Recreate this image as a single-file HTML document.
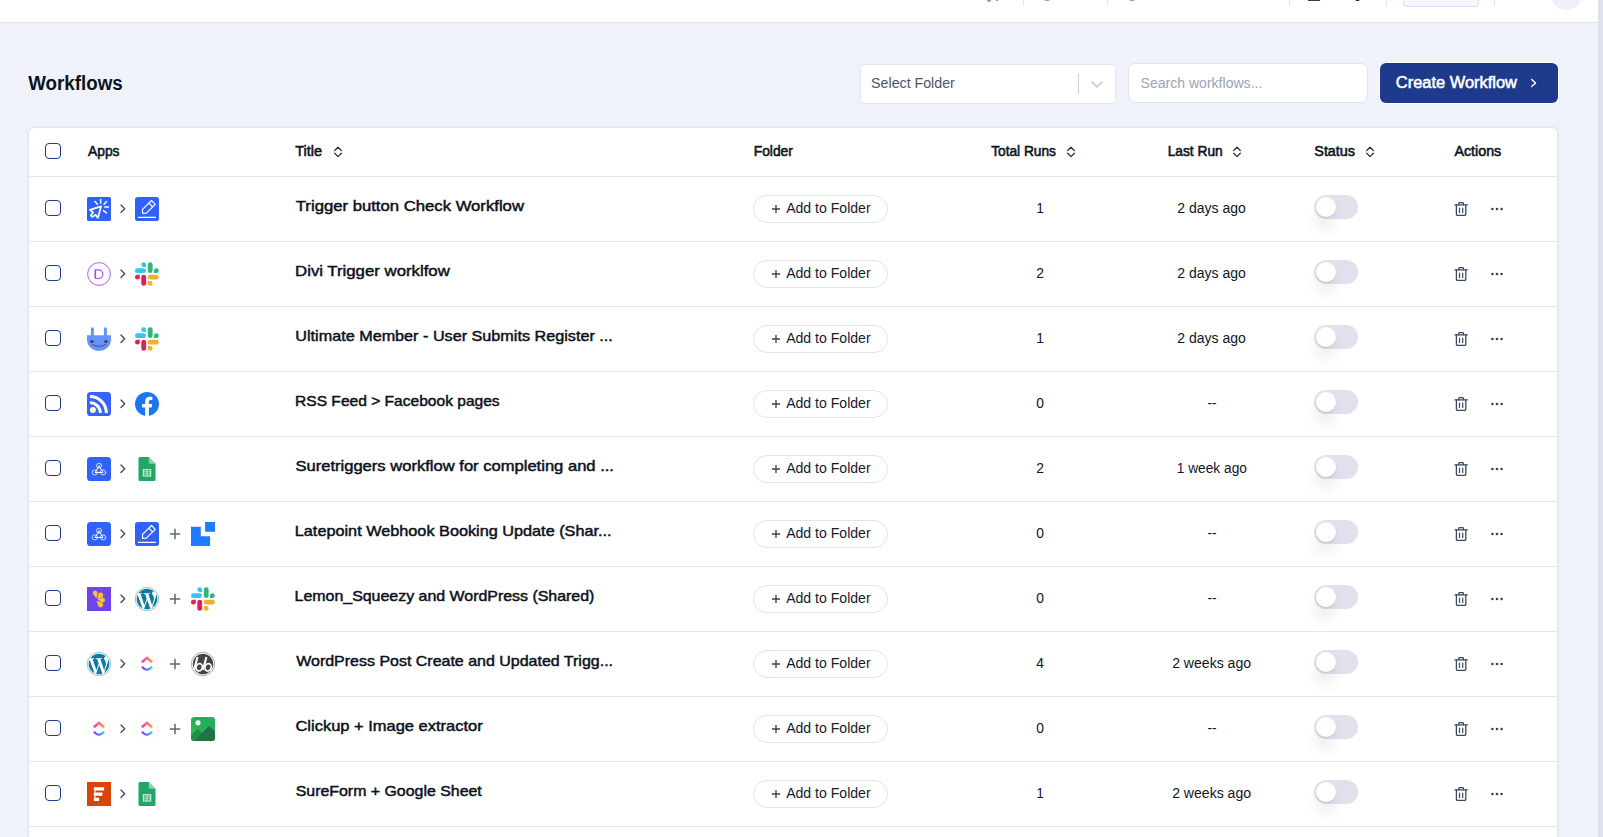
<!DOCTYPE html>
<html lang="en">
<head>
<meta charset="utf-8">
<title>Workflows</title>
<style>
*{box-sizing:border-box;margin:0;padding:0}
html,body{width:1603px;height:837px;overflow:hidden}
body{background:#eff2fb;font-family:"Liberation Sans",sans-serif;color:#111827;position:relative}
.abs{position:absolute}
.topbar{position:absolute;left:0;top:0;width:1598px;height:23px;background:#fff;border-bottom:1px solid #e1e5ef}
.vsep{position:absolute;top:0;width:1px;height:6px;background:#dfe3ec}
.scroll{position:absolute;left:1598px;top:0;width:5px;height:837px;background:#dde2ec}
h1{position:absolute;left:28px;top:70.4px;font-size:19.5px;line-height:26px;font-weight:700;color:#0b1220;white-space:nowrap}
.sel{position:absolute;left:860px;top:64px;width:256px;height:40px;background:#fff;border:1px solid #e1e5ef;border-radius:4px}
.sel .t{position:absolute;left:10px;top:0;line-height:36px;font-size:14px;color:#4b5563;white-space:nowrap}
.sel .sp{position:absolute;left:217px;top:8px;width:1px;height:21px;background:#cfcfcf}
.sel svg{position:absolute;left:230px;top:15.9px}
.search{position:absolute;left:1128px;top:63px;width:240px;height:40px;background:#fff;border:1px solid #e3e1f0;border-radius:7px}
.search .t{position:absolute;left:12px;top:0;line-height:38px;font-size:14px;color:#9aa4b8;white-space:nowrap}
.btn{position:absolute;left:1380px;top:63px;width:178px;height:40px;background:#1e3a8a;border-radius:6px;box-shadow:0 0 0 1px rgba(255,255,255,.75)}
.btn .t{position:absolute;left:16px;top:0;line-height:39px;font-size:16px;font-weight:400;-webkit-text-stroke:0.55px #fff;color:#fff;white-space:nowrap}
.btn svg{position:absolute;left:150px;top:15px}
.tbl{position:absolute;left:28px;top:127px;width:1530px;height:730px;background:#fff;border:1px solid #e1e6f0;border-radius:6px;box-shadow:0 0 0 1px rgba(215,222,236,.3)}
.in{position:absolute;left:1px;top:1px;right:0;bottom:0}
.hd{position:absolute;left:0;top:0;width:100%;height:48px}
.hd::after,.row::after{content:"";position:absolute;left:-1px;right:0;bottom:0;height:1px;background:#e2e6f0}
.th{position:absolute;top:15px;font-size:13.8px;line-height:16px;font-weight:400;-webkit-text-stroke:0.55px #0d1424;color:#0d1424;white-space:nowrap}
.srt{position:absolute;top:17px}
.row{position:absolute;left:0;width:100%;height:65px}
.cb{position:absolute;left:15px;width:16px;height:16px;border:1.5px solid #1e3a8a;border-radius:4px;background:#fff}
.hd .cb{top:14px}
.row .cb{top:23px}
.ic{position:absolute;top:20px;width:24px;height:24px}
.i1{left:57px}.i2{left:105px}.i3{left:161px}
.chev{position:absolute;left:90.1px;top:27.1px}
.plus{position:absolute;left:139px;top:26px}
.ttl{position:absolute;left:265px;top:18.5px;font-size:14.5px;line-height:20px;font-weight:400;-webkit-text-stroke:0.45px #0b1020;color:#0b1020;white-space:nowrap}
.pill{position:absolute;left:723px;top:18px;width:135px;height:28px;border:1px solid #e1e2ef;border-radius:14px;background:#fff}
.pill svg{position:absolute;left:17px;top:8px}
.pill .t{position:absolute;left:32px;top:0;line-height:26px;font-size:13.8px;color:#141b2b;white-space:nowrap}
.num{position:absolute;left:960px;width:100px;top:23px;text-align:center;font-size:13.8px;line-height:18px;color:#0f1626;white-space:nowrap}
.last span{display:inline-block}
.last .dsh{position:relative;top:0}
.last{position:absolute;left:1107px;width:150px;top:23px;text-align:center;font-size:13.8px;line-height:18px;color:#0f1626;white-space:nowrap}
.tog{position:absolute;left:1284px;top:18px;width:44px;height:24px;border-radius:12px;background:#e3dfed}
.tog i{position:absolute;left:2px;top:2px;width:20px;height:20px;border-radius:50%;background:#fff;box-shadow:-1px 12px 13px rgba(80,80,95,.10),0 1px 2px rgba(80,70,110,.12)}
.trash{position:absolute;left:1424px;top:24px}
.dots{position:absolute;left:1460px;top:30px}
</style>
</head>
<body>
<svg width="0" height="0" style="position:absolute"><defs>
<symbol id="i-click" viewBox="0 0 24 24"><rect width="24" height="24" rx="1.6" fill="#2f62fa"/>
<g fill="none" stroke="#fff" stroke-width="1.75" stroke-linecap="round" stroke-linejoin="round">
<path d="M14 9.4 L2.9 12.9 L6 15.3 L3.9 18.5 L5.4 19.9 L8.5 17.7 L10.9 20.9 Z"/>
<path stroke-width="1.5" d="M13.65 2.5 V5.9 M7.9 4.5 L10.5 7.2 M19.5 4.5 L17 7.2 M17.8 10 H21.5 M16.4 13.6 L19.4 15.8"/>
</g></symbol>
<symbol id="i-pencil" viewBox="0 0 24 24"><rect width="24" height="24" rx="2.8" fill="#2f62fa"/>
<g fill="none" stroke="#fff" stroke-width="1.2" stroke-linecap="round" stroke-linejoin="round">
<path d="M16.5 3.5 L20.2 7.3 L11.4 16.2 L7.5 16.3 L7.5 12.4 Z M13.9 6.1 L17.6 9.9"/>
<path d="M3.4 20.4 H20.4" stroke-width="1.15"/>
</g></symbol>
<symbol id="i-divi" viewBox="0 0 24 24"><circle cx="12" cy="12" r="11.4" fill="#fff" stroke="#a24dfa" stroke-width="0.9"/>
<path d="M8.4 7.8 H11.4 A4.35 4.35 0 0 1 11.4 16.5 H8.4 Z" fill="none" stroke="#a24dfa" stroke-width="1.15" stroke-linejoin="round"/><path d="M8.35 7.8 V16.5" stroke="#a24dfa" stroke-width="1.5"/></symbol>
<symbol id="i-slack" viewBox="0 0 24 24"><path d="M8.6 0.2 a2.4 2.4 0 0 0 0 4.8 h2.4 v-2.4 a2.4 2.4 0 0 0 -2.4 -2.4z" fill="#36c5f0"/>
<rect x="0" y="6.3" width="11" height="4.8" rx="2.4" fill="#36c5f0"/>
<rect x="12.8" y="0.2" width="4.8" height="10.9" rx="2.4" fill="#2eb67d"/>
<path d="M23.8 8.7 a2.4 2.4 0 0 0 -4.8 0 v2.4 h2.4 a2.4 2.4 0 0 0 2.4 -2.4z" fill="#2eb67d"/>
<path d="M0 15.2 a2.4 2.4 0 0 0 4.8 0 v-2.4 h-2.4 a2.4 2.4 0 0 0 -2.4 2.4z" fill="#e01e5a"/>
<rect x="6.3" y="12.8" width="4.8" height="11" rx="2.4" fill="#e01e5a"/>
<rect x="12.8" y="12.8" width="11" height="4.8" rx="2.4" fill="#ecb22e"/>
<path d="M15.2 23.8 a2.4 2.4 0 0 0 0 -4.8 h-2.4 v2.4 a2.4 2.4 0 0 0 2.4 2.4z" fill="#ecb22e"/></symbol>
<symbol id="i-plug" viewBox="0 0 24 24"><rect x="3.9" y="0.2" width="3" height="10" rx="1.5" fill="#6592fd"/>
<rect x="16.9" y="0.2" width="3" height="10" rx="1.5" fill="#6592fd"/>
<path d="M0 8.2 H24 V12.4 C24 18.8 18.6 23.8 12 23.8 C5.4 23.8 0 18.8 0 12.4 Z" fill="#6592fd"/>
<ellipse cx="4.8" cy="14.6" rx="1.8" ry="1.45" fill="#3f3b4a"/>
<ellipse cx="18.9" cy="14.6" rx="1.8" ry="1.45" fill="#3f3b4a"/>
<path d="M5.3 17.5 Q12 21.6 18.6 17.5" fill="none" stroke="#3a4a72" stroke-width="0.9" stroke-linecap="round"/></symbol>
<symbol id="i-rss" viewBox="0 0 24 24"><rect width="24" height="24" rx="3.6" fill="#3563fb"/>
<circle cx="5.9" cy="18" r="3" fill="#fff"/>
<path d="M2.9 10.6 A10.4 10.4 0 0 1 13.3 21" fill="none" stroke="#fff" stroke-width="2.9"/>
<path d="M2.9 4.5 A16.5 16.5 0 0 1 19.4 21" fill="none" stroke="#fff" stroke-width="3"/></symbol>
<symbol id="i-fb" viewBox="0 0 24 24"><path fill="#1877f2" d="M24 12.073c0-6.627-5.373-12-12-12s-12 5.373-12 12c0 5.99 4.388 10.954 10.125 11.854v-8.385H7.078v-3.47h3.047V9.43c0-3.007 1.792-4.669 4.533-4.669 1.312 0 2.686.235 2.686.235v2.953H15.83c-1.491 0-1.956.925-1.956 1.874v2.25h3.328l-.532 3.47h-2.796v8.385C19.612 23.027 24 18.062 24 12.073z"/></symbol>
<symbol id="i-webhook" viewBox="0 0 24 24"><rect width="24" height="24" rx="3.6" fill="#2f62fa"/>
<g fill="none" stroke="#fff" stroke-linecap="round" stroke-linejoin="round">
<circle cx="12" cy="8.7" r="2.55" stroke-width="0.8" opacity="0.92"/>
<ellipse cx="7.9" cy="15.4" rx="2.75" ry="2.55" stroke-width="0.8" opacity="0.92"/>
<ellipse cx="16" cy="15.4" rx="2.75" ry="2.55" stroke-width="0.8" opacity="0.92"/>
<path d="M12 8.9 L8.5 14.9 M12 8.9 L15.4 14.6" stroke-width="0.95"/>
<path d="M8.3 15.4 H15.8" stroke-width="1.05"/>
</g></symbol>
<symbol id="i-sheets" viewBox="0 0 24 24"><path d="M5 0 H13.8 L20.5 6.7 V22.4 A1.5 1.5 0 0 1 19 23.9 H5 A1.5 1.5 0 0 1 3.5 22.4 V1.5 A1.5 1.5 0 0 1 5 0 Z" fill="#22a565"/>
<path d="M13.8 0 L20.5 6.7 H15.2 A1.4 1.4 0 0 1 13.8 5.3 Z" fill="#8ed1b1"/>
<path d="M7.8 12.25 H16.2 V19.5 H7.8 Z M8.7 13.15 V14.6 H11.7 V13.15 Z M12.3 13.15 V14.6 H15.3 V13.15 Z M8.7 15.15 V16.6 H11.7 V15.15 Z M12.3 15.15 V16.6 H15.3 V15.15 Z M8.7 17.15 V18.6 H11.7 V17.15 Z M12.3 17.15 V18.6 H15.3 V17.15 Z" fill="#eef7f1" fill-rule="evenodd"/></symbol>
<symbol id="i-latepoint" viewBox="0 0 24 24"><path d="M0 4.7 H9.8 V14.25 H19.1 V23.9 H0 Z" fill="#1f7aff"/>
<rect x="14.1" y="0" width="9.9" height="9.75" fill="#1f7aff"/></symbol>
<symbol id="i-lemon" viewBox="0 0 24 24"><rect width="24" height="24" fill="#6d45ea"/>
<path d="M9.50 11.30 L6.37 7.28 A2.25 2.25 0 1 1 10.37 6.28 Z M10.50 11.80 L11.13 7.72 A2.5 2.5 0 1 1 14.41 10.47 Z M10.70 12.20 L14.88 10.82 A2.3 2.3 0 1 1 14.22 14.84 Z M9.70 14.00 L14.28 15.29 A2.5 2.5 0 1 1 11.23 18.51 Z" fill="#ffc233" stroke="#ffc233" stroke-width="0.25" stroke-linejoin="round"/></symbol>
<symbol id="i-wp" viewBox="0 0 24 24"><circle cx="12" cy="12" r="11.7" fill="#fff" stroke="#2483a8" stroke-width="0.5"/>
<path fill="#11799f" transform="translate(0.54 0.54) scale(0.955)" d="M21.469 6.825c.84 1.537 1.318 3.3 1.318 5.175 0 3.979-2.156 7.456-5.363 9.325l3.295-9.527c.615-1.54.82-2.771.82-3.864 0-.405-.026-.78-.07-1.11m-7.981.105c.647-.03 1.232-.105 1.232-.105.582-.075.514-.93-.067-.899 0 0-1.755.135-2.88.135-1.064 0-2.85-.15-2.85-.15-.585-.03-.661.855-.075.885 0 0 .54.061 1.125.09l1.68 4.605-2.37 7.08L5.354 6.9c.649-.03 1.234-.1 1.234-.1.585-.075.516-.93-.065-.896 0 0-1.746.138-2.874.138-.2 0-.438-.008-.69-.015C4.911 3.15 8.235 1.215 12 1.215c2.809 0 5.365 1.072 7.286 2.833-.046-.003-.091-.009-.141-.009-1.06 0-1.812.923-1.812 1.914 0 .89.513 1.643 1.06 2.531.411.72.89 1.643.89 2.977 0 .915-.354 1.994-.821 3.479l-1.075 3.585-3.9-11.61.001.014zM12 22.784c-1.059 0-2.081-.153-3.048-.437l3.237-9.406 3.315 9.087c.024.053.05.101.078.149-1.12.393-2.325.609-3.582.609M1.211 12c0-1.564.336-3.05.935-4.39L7.29 21.709C3.694 19.96 1.212 16.271 1.211 12"/></symbol>
<symbol id="i-clickup" viewBox="0 0 24 24"><defs>
<linearGradient id="cu1" x1="0" x2="1" y1="0" y2="0"><stop offset="0" stop-color="#f637c8"/><stop offset="1" stop-color="#ffa51f"/></linearGradient>
<linearGradient id="cu2" x1="0" x2="1" y1="0" y2="0"><stop offset="0" stop-color="#8b3bff"/><stop offset="1" stop-color="#41c8f6"/></linearGradient>
</defs>
<rect x="0.8" y="0.8" width="22.4" height="22.4" rx="5.5" fill="#fefefe" stroke="#f9f9fb" stroke-width="0.6"/>
<path d="M6.9 10.3 L12 5.8 L17.1 10.3" fill="none" stroke="url(#cu1)" stroke-width="2.5"/>
<path d="M7 14.8 Q12 20.7 17 14.8" fill="none" stroke="url(#cu2)" stroke-width="2.5"/></symbol>
<symbol id="i-bb" viewBox="0 0 24 24"><circle cx="12" cy="12" r="11.7" fill="#fff" stroke="#555" stroke-width="0.5"/>
<circle cx="12" cy="12" r="10.3" fill="#444"/>
<g fill="none" stroke="#fff">
<path d="M6.5 5 L3.1 18" stroke-width="2.1"/>
<ellipse cx="8.2" cy="15.3" rx="3.1" ry="3.7" transform="rotate(18 8.2 15.3)" stroke-width="1.7"/>
<path d="M15.4 5 L12 18" stroke-width="2.1"/>
<ellipse cx="17.1" cy="15.3" rx="3.1" ry="3.7" transform="rotate(18 17.1 15.3)" stroke-width="1.7"/>
</g></symbol>
<symbol id="i-image" viewBox="0 0 24 24"><defs><linearGradient id="img1" x1="0" y1="1" x2="1" y2="0"><stop offset="0" stop-color="#43b944"/><stop offset="0.6" stop-color="#22b05e"/><stop offset="1" stop-color="#1fad60"/></linearGradient>
<clipPath id="imgc"><rect width="24" height="24" rx="3.2"/></clipPath></defs>
<g clip-path="url(#imgc)">
<rect width="24" height="24" fill="url(#img1)"/>
<circle cx="7" cy="5.7" r="2.55" fill="#fff"/>
<path d="M-1 19.3 L6.85 12 L15 20 V24 H-1 Z" fill="#1f8e4d"/>
<path d="M3.3 24 L17.8 8.9 L24.5 15 V24 Z" fill="#217244"/>
</g></symbol>
<symbol id="i-sureforms" viewBox="0 0 24 24"><rect width="24" height="24" fill="#d8450b"/>
<rect x="6.9" y="5.25" width="2" height="13.7" fill="#f6c9b4" opacity="0.75"/>
<rect x="6.9" y="5.25" width="10.25" height="3.25" fill="#fff"/>
<rect x="6.9" y="10.5" width="8.5" height="3.25" fill="#fff"/>
<rect x="6.9" y="15.75" width="5.25" height="3.25" fill="#fff"/></symbol>
<symbol id="i-chev" viewBox="0 0 8 11"><path d="M1 1 L4.7 4.7 L1 8.5" fill="none" stroke="#434e63" stroke-width="1.4" stroke-linecap="round" stroke-linejoin="round"/></symbol>
<symbol id="i-plus" viewBox="0 0 12 12"><path d="M6 0.8 V11.2 M0.8 6 H11.2" fill="none" stroke="#5d6980" stroke-width="1.5" stroke-linecap="butt"/></symbol>
<symbol id="i-sort" viewBox="0 0 10 12"><path d="M1.7 4.5 L5 1.2 L8.3 4.5 M1.7 7.3 L5 10.6 L8.3 7.3" fill="none" stroke="#2a3448" stroke-width="1.3" stroke-linecap="round" stroke-linejoin="round"/></symbol>
<symbol id="i-trash" viewBox="0 0 14 16"><g transform="translate(0.1 0.5)" fill="none" stroke="#3a4860" stroke-width="1.3" stroke-linecap="round" stroke-linejoin="round"><path d="M0.8 3.3 H13.2"/><path d="M4.7 3.2 V1.9 a0.8 0.8 0 0 1 0.8 -0.8 H8.5 a0.8 0.8 0 0 1 0.8 0.8 V3.2"/><path d="M2.3 3.5 V12.7 a1.2 1.2 0 0 0 1.2 1.2 H10.5 a1.2 1.2 0 0 0 1.2 -1.2 V3.5"/><path d="M5.4 6.5 V11 M8.6 6.5 V11" stroke-width="1.2"/></g></symbol>
<symbol id="i-pplus" viewBox="0 0 10 10"><path d="M5 0.9 V9.1 M0.9 5 H9.1" fill="none" stroke="#374151" stroke-width="1.3"/></symbol>
</defs></svg>
<div class="topbar">
  <div class="vsep" style="left:1023px"></div>
  <div class="vsep" style="left:1107px"></div>
  <div class="vsep" style="left:1289px"></div>
  <div class="vsep" style="left:1386px"></div>
  <div class="vsep" style="left:1494px"></div>
  <div class="abs" style="left:987px;top:-2px;width:4px;height:4px;border-radius:50%;background:#8a96b0"></div>
  <div class="abs" style="left:996px;top:0;width:1.5px;height:1px;background:#8a96b0"></div>
  <div class="abs" style="left:1042px;top:-8px;width:10px;height:9.3px;border-radius:50%;border:1.3px solid #8f9bb5"></div>
  <div class="abs" style="left:1127px;top:-8px;width:10px;height:9.3px;border-radius:50%;border:1.3px solid #8f9bb5"></div>
  <div class="abs" style="left:1308px;top:0;width:12px;height:1px;background:#3a3f4a"></div>
  <div class="abs" style="left:1355px;top:-3px;width:5px;height:4.2px;border-radius:50%;background:#15181f"></div>
  <div class="abs" style="left:1403px;top:-6px;width:76px;height:13px;border:1px solid #e9d5fb;border-radius:4px;background:#f8f4fe"></div>
  <div class="abs" style="left:1551px;top:-21.4px;width:31px;height:31px;border-radius:50%;background:#eef1f7"></div>
</div>
<div class="scroll"></div>

<h1 style="transform:translateX(0.25px) scaleX(0.9613);transform-origin:left center;">Workflows</h1>
<div class="sel"><span class="t" style="transform:translateX(0.10px) scaleX(1.0148);transform-origin:left center;">Select Folder</span><span class="sp"></span>
  <svg width="12" height="8" viewBox="0 0 12 8"><path d="M1.2 1.2 L6 5.9 L10.8 1.2" fill="none" stroke="#cccccc" stroke-width="1.8" stroke-linecap="round" stroke-linejoin="round"/></svg>
</div>
<div class="search"><span class="t" style="transform:translateX(-0.45px) scaleX(1.0034);transform-origin:left center;">Search workflows...</span></div>
<div class="btn"><span class="t" style="transform:translateX(-0.20px) scaleX(1.0269);transform-origin:left center;">Create Workflow</span>
  <svg width="8" height="10" viewBox="0 0 8 10"><path d="M1.6 1.5 L5.6 5 L1.6 8.5" fill="none" stroke="#fff" stroke-width="1.4" stroke-linecap="round" stroke-linejoin="round"/></svg>
</div>

<div class="tbl"><div class="in">
  <div class="hd">
    <div class="cb"></div>
    <div class="th" style="left:57px;transform:translateX(1.00px) scaleX(1.0000);transform-origin:left center;">Apps</div>
    <div class="th" style="left:265px;transform:translateX(0.18px) scaleX(1.0543);transform-origin:left center;">Title</div><svg class="srt" style="left:303px" width="10" height="12"><use href="#i-sort"/></svg>
    <div class="th" style="left:723px;transform:translateX(0.75px) scaleX(1.0003);transform-origin:left center;">Folder</div>
    <div class="th" style="left:960px;transform:translateX(1.15px) scaleX(0.9942);transform-origin:left center;">Total Runs</div><svg class="srt" style="left:1036px" width="10" height="12"><use href="#i-sort"/></svg>
    <div class="th" style="left:1137px;transform:translateX(0.70px) scaleX(0.9964);transform-origin:left center;">Last Run</div><svg class="srt" style="left:1202px" width="10" height="12"><use href="#i-sort"/></svg>
    <div class="th" style="left:1284px;transform:translateX(0.30px) scaleX(1.0413);transform-origin:left center;">Status</div><svg class="srt" style="left:1335px" width="10" height="12"><use href="#i-sort"/></svg>
    <div class="th" style="left:1423px;transform:translateX(1.40px) scaleX(1.0351);transform-origin:left center;">Actions</div>
  </div>
  <div class="row" style="top:48px">
<div class="cb"></div>
<svg class="ic i1" viewBox="0 0 24 24"><use href="#i-click"/></svg>
<svg class="ic i2" viewBox="0 0 24 24"><use href="#i-pencil"/></svg>
<svg class="chev" width="8" height="11"><use href="#i-chev"/></svg>
<div class="ttl" style="transform:translateX(0.80px) scaleX(1.1508);transform-origin:left center">Trigger button Check Workflow</div>
<div class="pill"><svg width="10" height="10"><use href="#i-pplus"/></svg><span class="t" style="transform:translateX(0.15px) scaleX(1.0193);transform-origin:left center">Add to Folder</span></div>
<div class="num">1</div><div class="last"><span style="transform:translateX(-0.15px) scaleX(1.0150);transform-origin:center center">2 days ago</span></div>
<div class="tog"><i></i></div>
<svg class="trash" width="14" height="16"><use href="#i-trash"/></svg>
<svg class="dots" width="14" height="4" viewBox="0 0 14 4"><circle cx="2.4" cy="2" r="1.3" fill="#36425a"/><circle cx="7" cy="2" r="1.3" fill="#36425a"/><circle cx="11.6" cy="2" r="1.3" fill="#36425a"/></svg>
</div>
<div class="row" style="top:113px">
<div class="cb"></div>
<svg class="ic i1" viewBox="0 0 24 24"><use href="#i-divi"/></svg>
<svg class="ic i2" viewBox="0 0 24 24"><use href="#i-slack"/></svg>
<svg class="chev" width="8" height="11"><use href="#i-chev"/></svg>
<div class="ttl" style="transform:translateX(0.05px) scaleX(1.1567);transform-origin:left center">Divi Trigger worklfow</div>
<div class="pill"><svg width="10" height="10"><use href="#i-pplus"/></svg><span class="t" style="transform:translateX(0.15px) scaleX(1.0193);transform-origin:left center">Add to Folder</span></div>
<div class="num">2</div><div class="last"><span style="transform:translateX(-0.15px) scaleX(1.0150);transform-origin:center center">2 days ago</span></div>
<div class="tog"><i></i></div>
<svg class="trash" width="14" height="16"><use href="#i-trash"/></svg>
<svg class="dots" width="14" height="4" viewBox="0 0 14 4"><circle cx="2.4" cy="2" r="1.3" fill="#36425a"/><circle cx="7" cy="2" r="1.3" fill="#36425a"/><circle cx="11.6" cy="2" r="1.3" fill="#36425a"/></svg>
</div>
<div class="row" style="top:178px">
<div class="cb"></div>
<svg class="ic i1" viewBox="0 0 24 24"><use href="#i-plug"/></svg>
<svg class="ic i2" viewBox="0 0 24 24"><use href="#i-slack"/></svg>
<svg class="chev" width="8" height="11"><use href="#i-chev"/></svg>
<div class="ttl" style="transform:translateX(0.30px) scaleX(1.1162);transform-origin:left center">Ultimate Member - User Submits Register ...</div>
<div class="pill"><svg width="10" height="10"><use href="#i-pplus"/></svg><span class="t" style="transform:translateX(0.15px) scaleX(1.0193);transform-origin:left center">Add to Folder</span></div>
<div class="num">1</div><div class="last"><span style="transform:translateX(-0.15px) scaleX(1.0150);transform-origin:center center">2 days ago</span></div>
<div class="tog"><i></i></div>
<svg class="trash" width="14" height="16"><use href="#i-trash"/></svg>
<svg class="dots" width="14" height="4" viewBox="0 0 14 4"><circle cx="2.4" cy="2" r="1.3" fill="#36425a"/><circle cx="7" cy="2" r="1.3" fill="#36425a"/><circle cx="11.6" cy="2" r="1.3" fill="#36425a"/></svg>
</div>
<div class="row" style="top:243px">
<div class="cb"></div>
<svg class="ic i1" viewBox="0 0 24 24"><use href="#i-rss"/></svg>
<svg class="ic i2" viewBox="0 0 24 24"><use href="#i-fb"/></svg>
<svg class="chev" width="8" height="11"><use href="#i-chev"/></svg>
<div class="ttl" style="transform:translateX(0.05px) scaleX(1.0733);transform-origin:left center">RSS Feed &gt; Facebook pages</div>
<div class="pill"><svg width="10" height="10"><use href="#i-pplus"/></svg><span class="t" style="transform:translateX(0.15px) scaleX(1.0193);transform-origin:left center">Add to Folder</span></div>
<div class="num">0</div><div class="last"><span class="dsh">--</span></div>
<div class="tog"><i></i></div>
<svg class="trash" width="14" height="16"><use href="#i-trash"/></svg>
<svg class="dots" width="14" height="4" viewBox="0 0 14 4"><circle cx="2.4" cy="2" r="1.3" fill="#36425a"/><circle cx="7" cy="2" r="1.3" fill="#36425a"/><circle cx="11.6" cy="2" r="1.3" fill="#36425a"/></svg>
</div>
<div class="row" style="top:308px">
<div class="cb"></div>
<svg class="ic i1" viewBox="0 0 24 24"><use href="#i-webhook"/></svg>
<svg class="ic i2" viewBox="0 0 24 24"><use href="#i-sheets"/></svg>
<svg class="chev" width="8" height="11"><use href="#i-chev"/></svg>
<div class="ttl" style="transform:translateX(0.40px) scaleX(1.1425);transform-origin:left center">Suretriggers workflow for completing and ...</div>
<div class="pill"><svg width="10" height="10"><use href="#i-pplus"/></svg><span class="t" style="transform:translateX(0.15px) scaleX(1.0193);transform-origin:left center">Add to Folder</span></div>
<div class="num">2</div><div class="last"><span style="transform:translateX(-0.45px) scaleX(0.9944);transform-origin:center center">1 week ago</span></div>
<div class="tog"><i></i></div>
<svg class="trash" width="14" height="16"><use href="#i-trash"/></svg>
<svg class="dots" width="14" height="4" viewBox="0 0 14 4"><circle cx="2.4" cy="2" r="1.3" fill="#36425a"/><circle cx="7" cy="2" r="1.3" fill="#36425a"/><circle cx="11.6" cy="2" r="1.3" fill="#36425a"/></svg>
</div>
<div class="row" style="top:373px">
<div class="cb"></div>
<svg class="ic i1" viewBox="0 0 24 24"><use href="#i-webhook"/></svg>
<svg class="ic i2" viewBox="0 0 24 24"><use href="#i-pencil"/></svg>
<svg class="ic i3" viewBox="0 0 24 24"><use href="#i-latepoint"/></svg>
<svg class="chev" width="8" height="11"><use href="#i-chev"/></svg>
<svg class="plus" width="12" height="12"><use href="#i-plus"/></svg>
<div class="ttl" style="transform:translateX(-0.20px) scaleX(1.1206);transform-origin:left center">Latepoint Webhook Booking Update (Shar...</div>
<div class="pill"><svg width="10" height="10"><use href="#i-pplus"/></svg><span class="t" style="transform:translateX(0.15px) scaleX(1.0193);transform-origin:left center">Add to Folder</span></div>
<div class="num">0</div><div class="last"><span class="dsh">--</span></div>
<div class="tog"><i></i></div>
<svg class="trash" width="14" height="16"><use href="#i-trash"/></svg>
<svg class="dots" width="14" height="4" viewBox="0 0 14 4"><circle cx="2.4" cy="2" r="1.3" fill="#36425a"/><circle cx="7" cy="2" r="1.3" fill="#36425a"/><circle cx="11.6" cy="2" r="1.3" fill="#36425a"/></svg>
</div>
<div class="row" style="top:438px">
<div class="cb"></div>
<svg class="ic i1" viewBox="0 0 24 24"><use href="#i-lemon"/></svg>
<svg class="ic i2" viewBox="0 0 24 24"><use href="#i-wp"/></svg>
<svg class="ic i3" viewBox="0 0 24 24"><use href="#i-slack"/></svg>
<svg class="chev" width="8" height="11"><use href="#i-chev"/></svg>
<svg class="plus" width="12" height="12"><use href="#i-plus"/></svg>
<div class="ttl" style="transform:translateX(-0.40px) scaleX(1.0982);transform-origin:left center">Lemon_Squeezy and WordPress (Shared)</div>
<div class="pill"><svg width="10" height="10"><use href="#i-pplus"/></svg><span class="t" style="transform:translateX(0.15px) scaleX(1.0193);transform-origin:left center">Add to Folder</span></div>
<div class="num">0</div><div class="last"><span class="dsh">--</span></div>
<div class="tog"><i></i></div>
<svg class="trash" width="14" height="16"><use href="#i-trash"/></svg>
<svg class="dots" width="14" height="4" viewBox="0 0 14 4"><circle cx="2.4" cy="2" r="1.3" fill="#36425a"/><circle cx="7" cy="2" r="1.3" fill="#36425a"/><circle cx="11.6" cy="2" r="1.3" fill="#36425a"/></svg>
</div>
<div class="row" style="top:503px">
<div class="cb"></div>
<svg class="ic i1" viewBox="0 0 24 24"><use href="#i-wp"/></svg>
<svg class="ic i2" viewBox="0 0 24 24"><use href="#i-clickup"/></svg>
<svg class="ic i3" viewBox="0 0 24 24"><use href="#i-bb"/></svg>
<svg class="chev" width="8" height="11"><use href="#i-chev"/></svg>
<svg class="plus" width="12" height="12"><use href="#i-plus"/></svg>
<div class="ttl" style="transform:translateX(1.20px) scaleX(1.1021);transform-origin:left center">WordPress Post Create and Updated Trigg...</div>
<div class="pill"><svg width="10" height="10"><use href="#i-pplus"/></svg><span class="t" style="transform:translateX(0.15px) scaleX(1.0193);transform-origin:left center">Add to Folder</span></div>
<div class="num">4</div><div class="last"><span style="transform:translateX(-0.15px) scaleX(1.0182);transform-origin:center center">2 weeks ago</span></div>
<div class="tog"><i></i></div>
<svg class="trash" width="14" height="16"><use href="#i-trash"/></svg>
<svg class="dots" width="14" height="4" viewBox="0 0 14 4"><circle cx="2.4" cy="2" r="1.3" fill="#36425a"/><circle cx="7" cy="2" r="1.3" fill="#36425a"/><circle cx="11.6" cy="2" r="1.3" fill="#36425a"/></svg>
</div>
<div class="row" style="top:568px">
<div class="cb"></div>
<svg class="ic i1" viewBox="0 0 24 24"><use href="#i-clickup"/></svg>
<svg class="ic i2" viewBox="0 0 24 24"><use href="#i-clickup"/></svg>
<svg class="ic i3" viewBox="0 0 24 24"><use href="#i-image"/></svg>
<svg class="chev" width="8" height="11"><use href="#i-chev"/></svg>
<svg class="plus" width="12" height="12"><use href="#i-plus"/></svg>
<div class="ttl" style="transform:translateX(0.45px) scaleX(1.1358);transform-origin:left center">Clickup + Image extractor</div>
<div class="pill"><svg width="10" height="10"><use href="#i-pplus"/></svg><span class="t" style="transform:translateX(0.15px) scaleX(1.0193);transform-origin:left center">Add to Folder</span></div>
<div class="num">0</div><div class="last"><span class="dsh">--</span></div>
<div class="tog"><i></i></div>
<svg class="trash" width="14" height="16"><use href="#i-trash"/></svg>
<svg class="dots" width="14" height="4" viewBox="0 0 14 4"><circle cx="2.4" cy="2" r="1.3" fill="#36425a"/><circle cx="7" cy="2" r="1.3" fill="#36425a"/><circle cx="11.6" cy="2" r="1.3" fill="#36425a"/></svg>
</div>
<div class="row" style="top:633px">
<div class="cb"></div>
<svg class="ic i1" viewBox="0 0 24 24"><use href="#i-sureforms"/></svg>
<svg class="ic i2" viewBox="0 0 24 24"><use href="#i-sheets"/></svg>
<svg class="chev" width="8" height="11"><use href="#i-chev"/></svg>
<div class="ttl" style="transform:translateX(0.70px) scaleX(1.0965);transform-origin:left center">SureForm + Google Sheet</div>
<div class="pill"><svg width="10" height="10"><use href="#i-pplus"/></svg><span class="t" style="transform:translateX(0.15px) scaleX(1.0193);transform-origin:left center">Add to Folder</span></div>
<div class="num">1</div><div class="last"><span style="transform:translateX(-0.15px) scaleX(1.0182);transform-origin:center center">2 weeks ago</span></div>
<div class="tog"><i></i></div>
<svg class="trash" width="14" height="16"><use href="#i-trash"/></svg>
<svg class="dots" width="14" height="4" viewBox="0 0 14 4"><circle cx="2.4" cy="2" r="1.3" fill="#36425a"/><circle cx="7" cy="2" r="1.3" fill="#36425a"/><circle cx="11.6" cy="2" r="1.3" fill="#36425a"/></svg>
</div>
</div></div>
</body>
</html>
